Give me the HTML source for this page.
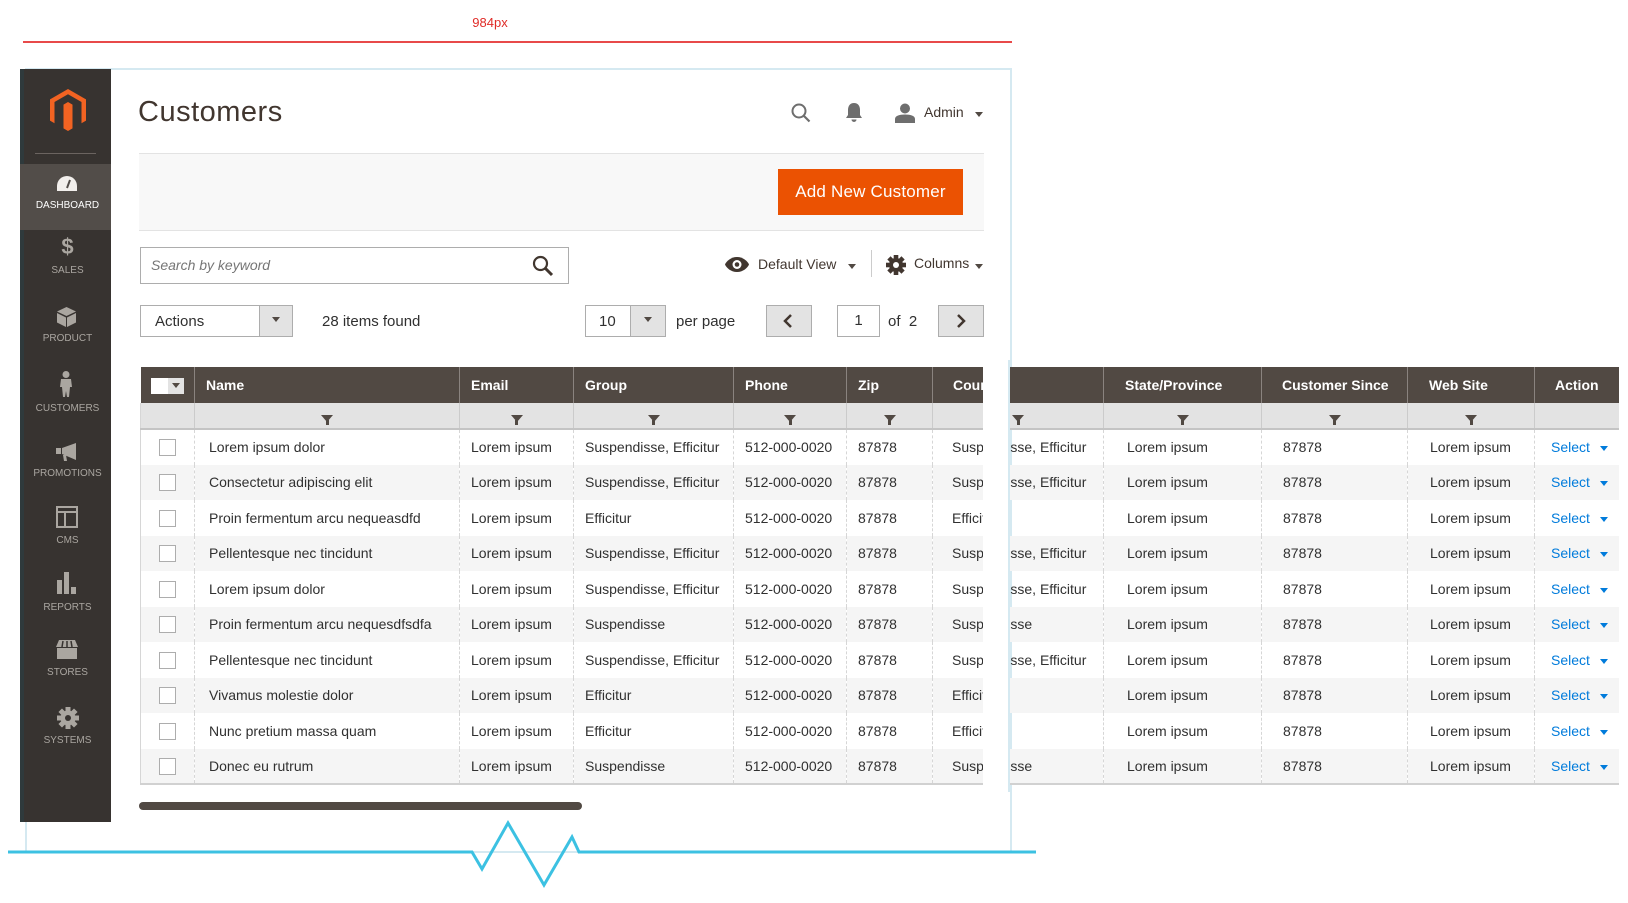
<!DOCTYPE html>
<html><head><meta charset="utf-8">
<style>
*{box-sizing:border-box;margin:0;padding:0}
body{width:1628px;height:903px;background:#fff;position:relative;overflow:hidden;font-family:"Liberation Sans",sans-serif;color:#303030}
.a{position:absolute}
.frame{left:25px;top:68px;width:987px;height:785px;border:2px solid #d5e9f1;background:#fff}
.side{left:20px;top:69px;width:91px;height:753px;background:#373330;border-left:4px solid #2f3a3c}
.mi{position:absolute;left:0;width:87px;text-align:center;font-size:10px;color:#aaa6a0;text-transform:uppercase}
.tbl{left:140px;top:367px;border-collapse:collapse;table-layout:fixed;width:1478px;font-size:14px;z-index:2}
.tbl th{background:#514943;color:#fff;font-weight:bold;text-align:left;height:36px;border-left:1px solid #8a837f;padding-left:11px;white-space:nowrap;overflow:hidden}
.tbl tr.f td{background:#e3e3e3;height:26px;border-left:1px solid #cbcbcb;border-bottom:2px solid #c4c4c4;text-align:center;padding:0}
.tbl td{height:35.5px;white-space:nowrap;overflow:hidden;border-left:1px dashed #d6d6d6;padding-left:11px}
.tbl tr.d:nth-child(even) td{background:#f5f5f5}
.tbl tr.d td:first-child{border-left:1px solid #d6d6d6}
.tbl tr.d:last-child td{border-bottom:2px solid #d1d1d1}
.cb{display:inline-block;width:17px;height:17px;border:1px solid #adadad;background:#fff;vertical-align:middle}
.sel{color:#007bdb}
.fn{display:inline-block;width:0;height:0;border-left:6px solid transparent;border-right:6px solid transparent;border-top:7px solid #514943;position:relative;top:1px}
.fn::after{content:"";position:absolute;left:-1.5px;top:-2px;width:3px;height:5px;background:#514943}
.car{display:inline-block;width:0;height:0;border-left:4px solid transparent;border-right:4px solid transparent;border-top:5px solid #514943;vertical-align:middle}
.btnb{border:1px solid #adadad;background:#fff}
</style></head><body>
<div class="a" style="left:470px;top:15px;width:40px;text-align:center;color:#e02b27;font-size:13px">984px</div>
<div class="a" style="left:23px;top:41px;width:989px;height:2px;background:#e84a4a"></div>

<div class="a frame"></div>

<div class="a side">
  <svg class="a" style="left:26px;top:20px" width="36" height="42" viewBox="0 0 36 42"><path fill="#f26322" d="M18 0 L36 10.4 V31.6 L31.5 34.2 V13 L18 5.2 L4.5 13 V34.2 L0 31.6 V10.4 Z M13.5 15.6 L18 13 L22.5 15.6 V39.4 L18 42 L13.5 39.4 Z"/></svg>
  <div class="a" style="left:11px;top:84px;width:61px;height:1px;background:#6b6460"></div>
  <div class="a" style="left:-4px;top:95px;width:91px;height:66px;background:#524d49"></div>
  <svg class="a" style="left:33px;top:107px" width="20" height="15" viewBox="0 0 20 15"><path fill="#f2efec" d="M10 0A10 10 0 0 0 0 10V15H20V10A10 10 0 0 0 10 0Z"/><path stroke="#524d49" stroke-width="2" d="M10 12L13 4"/></svg>
  <div class="mi" style="top:131px;color:#fff">Dashboard</div>
  <div class="mi" style="top:165px;font-size:22px;font-weight:bold">$</div>
  <div class="mi" style="top:196px">Sales</div>
  <svg class="a" style="left:33px;top:238px" width="19" height="20" viewBox="0 0 19 20"><path fill="#aaa6a0" d="M9.5 0L19 4.5 9.5 9 0 4.5ZM0 6L9 10.5V20L0 15.5ZM10 10.5L19 6V15.5L10 20Z"/></svg>
  <div class="mi" style="top:264px">Product</div>
  <svg class="a" style="left:35px;top:302px" width="14" height="26" viewBox="0 0 14 26"><circle cx="7" cy="3.5" r="3.5" fill="#aaa6a0"/><path fill="#aaa6a0" d="M2 8H12L13 16H11L10 26H8L7 20 6 26H4L3 16H1Z"/></svg>
  <div class="mi" style="top:334px">Customers</div>
  <svg class="a" style="left:32px;top:374px" width="22" height="18" viewBox="0 0 22 18"><path fill="#aaa6a0" d="M0 5H5V11H0ZM6 5L20 0V17L6 11ZM7 12H10L11 18H8Z"/></svg>
  <div class="mi" style="top:399px">Promotions</div>
  <svg class="a" style="left:32px;top:437px" width="22" height="22" viewBox="0 0 22 22"><path fill="#aaa6a0" d="M0 0H22V22H0ZM2 2V5H20V2ZM2 7V20H8V7ZM10 7V20H20V7Z"/></svg>
  <div class="mi" style="top:466px">CMS</div>
  <svg class="a" style="left:33px;top:503px" width="20" height="22" viewBox="0 0 20 22"><path fill="#aaa6a0" d="M0 8H5V22H0ZM7 0H12V22H7ZM14 15H19V22H14Z"/></svg>
  <div class="mi" style="top:533px">Reports</div>
  <svg class="a" style="left:32px;top:571px" width="22" height="19" viewBox="0 0 22 19"><path fill="#aaa6a0" d="M3 0H19L22 7H0ZM1 8H21V19H1Z"/><path stroke="#373330" stroke-width="1.5" d="M7 1L6 7M11 1V7M15 1L16 7"/></svg>
  <div class="mi" style="top:598px">Stores</div>
  <svg class="a" style="left:33px;top:638px" width="22" height="22" viewBox="-11 -11 22 22"><g fill="#aaa6a0"><circle r="7.5"/><rect x="-2.5" y="-11" width="5" height="22"/><rect x="-2.5" y="-11" width="5" height="22" transform="rotate(45)"/><rect x="-2.5" y="-11" width="5" height="22" transform="rotate(90)"/><rect x="-2.5" y="-11" width="5" height="22" transform="rotate(135)"/></g><circle r="3" fill="#373330"/></svg>
  <div class="mi" style="top:666px">Systems</div>
</div>

<div class="a" style="left:138px;top:96px;font-size:29px;color:#41362f;letter-spacing:0.5px">Customers</div>
<svg class="a" style="left:791px;top:103px" width="20" height="20" viewBox="0 0 20 20"><circle cx="8" cy="8" r="6.5" fill="none" stroke="#6e6e6e" stroke-width="2"/><path d="M13 13L18.5 18.5" stroke="#6e6e6e" stroke-width="2.2"/></svg>
<svg class="a" style="left:845px;top:103px" width="18" height="20" viewBox="0 0 18 20"><path fill="#6e6e6e" d="M9 0C5 0 3 3 3 7V12L1 15H17L15 12V7C15 3 13 0 9 0ZM6.5 16.5A2.5 2.5 0 0 0 11.5 16.5Z"/></svg>
<svg class="a" style="left:895px;top:103px" width="20" height="20" viewBox="0 0 20 20"><circle cx="10" cy="5.5" r="5" fill="#6e6e6e"/><path fill="#6e6e6e" d="M0 20V16C0 13 4 11.5 10 11.5S20 13 20 16V20Z"/></svg>
<div class="a" style="left:924px;top:104px;font-size:14px;color:#41362f">Admin</div>
<div class="a" style="left:975px;top:106px"><span class="car"></span></div>

<div class="a" style="left:139px;top:153px;width:845px;height:78px;background:#f8f8f8;border-top:1px solid #e3e3e3;border-bottom:1px solid #e3e3e3"></div>
<div class="a" style="left:778px;top:169px;width:185px;height:46px;background:#eb5202;color:#fff;font-size:17px;line-height:46px;text-align:center;letter-spacing:0.2px">Add New Customer</div>

<div class="a btnb" style="left:140px;top:247px;width:429px;height:37px"></div>
<div class="a" style="left:151px;top:257px;font-size:14px;font-style:italic;color:#757575">Search by keyword</div>
<svg class="a" style="left:532px;top:255px" width="22" height="22" viewBox="0 0 22 22"><circle cx="8.5" cy="8.5" r="6.5" fill="none" stroke="#41362f" stroke-width="2.2"/><path d="M13.5 13.5L20 20" stroke="#41362f" stroke-width="3"/></svg>

<svg class="a" style="left:725px;top:257px" width="24" height="15" viewBox="0 0 24 15"><path fill="#41362f" d="M12 0C6 0 1.5 4 0 7.5 1.5 11 6 15 12 15S22.5 11 24 7.5C22.5 4 18 0 12 0Z"/><circle cx="12" cy="7.5" r="4.5" fill="#fff"/><circle cx="12" cy="7.5" r="2.3" fill="#41362f"/></svg>
<div class="a" style="left:758px;top:256px;font-size:14px;color:#41362f">Default View</div>
<div class="a" style="left:848px;top:258px"><span class="car"></span></div>
<div class="a" style="left:871px;top:250px;width:1px;height:27px;background:#ccc"></div>
<svg class="a" style="left:886px;top:255px" width="20" height="20" viewBox="-10 -10 20 20"><g fill="#41362f"><circle r="7"/><rect x="-2.3" y="-10" width="4.6" height="20"/><rect x="-2.3" y="-10" width="4.6" height="20" transform="rotate(45)"/><rect x="-2.3" y="-10" width="4.6" height="20" transform="rotate(90)"/><rect x="-2.3" y="-10" width="4.6" height="20" transform="rotate(135)"/></g><circle r="3" fill="#fff"/></svg>
<div class="a" style="left:914px;top:255px;font-size:14px;color:#41362f">Columns</div>
<div class="a" style="left:975px;top:258px"><span class="car"></span></div>

<div class="a btnb" style="left:140px;top:305px;width:153px;height:32px"></div>
<div class="a" style="left:259px;top:306px;width:33px;height:30px;background:#e3e3e3;border-left:1px solid #adadad;text-align:center;line-height:28px"><span class="car"></span></div>
<div class="a" style="left:155px;top:313px;font-size:15px;color:#303030">Actions</div>
<div class="a" style="left:322px;top:313px;font-size:15px;color:#303030">28 items found</div>
<div class="a btnb" style="left:585px;top:305px;width:81px;height:32px"></div>
<div class="a" style="left:630px;top:306px;width:35px;height:30px;background:#e3e3e3;border-left:1px solid #adadad;text-align:center;line-height:28px"><span class="car"></span></div>
<div class="a" style="left:599px;top:313px;font-size:15px">10</div>
<div class="a" style="left:676px;top:313px;font-size:15px">per page</div>
<div class="a" style="left:766px;top:305px;width:46px;height:32px;background:#e3e3e3;border:1px solid #adadad"></div>
<svg class="a" style="left:783px;top:314px" width="10" height="14" viewBox="0 0 10 14"><path d="M8 1L2 7 8 13" fill="none" stroke="#41362f" stroke-width="2.5"/></svg>
<div class="a btnb" style="left:837px;top:305px;width:43px;height:32px;text-align:center;line-height:30px;font-size:15px">1</div>
<div class="a" style="left:888px;top:313px;font-size:15px">of&nbsp; 2</div>
<div class="a" style="left:938px;top:305px;width:46px;height:32px;background:#e3e3e3;border:1px solid #adadad"></div>
<svg class="a" style="left:956px;top:314px" width="10" height="14" viewBox="0 0 10 14"><path d="M2 1L8 7 2 13" fill="none" stroke="#41362f" stroke-width="2.5"/></svg>

<table class="a tbl">
<colgroup><col style="width:54px"><col style="width:265px"><col style="width:114px"><col style="width:160px"><col style="width:113px"><col style="width:86px"><col style="width:171px"><col style="width:158px"><col style="width:146px"><col style="width:127px"><col style="width:84px"></colgroup>
<tr><th style="border-left:none;padding-left:10px"><span style="display:inline-block;width:17px;height:16px;background:#fff;vertical-align:middle"></span><span style="display:inline-block;width:16px;height:16px;background:#e3e3e3;vertical-align:middle;text-align:center;line-height:14px"><span class="car"></span></span></th><th>Name</th><th>Email</th><th>Group</th><th>Phone</th><th>Zip</th><th style="padding-left:20px">Country</th><th style="padding-left:21px">State/Province</th><th style="padding-left:20px">Customer Since</th><th style="padding-left:21px">Web Site</th><th style="padding-left:20px">Action</th></tr>
<tr class="f"><td style="border-left:1px solid #d6d6d6"></td><td><span class="fn"></span></td><td><span class="fn"></span></td><td><span class="fn"></span></td><td><span class="fn"></span></td><td><span class="fn"></span></td><td><span class="fn"></span></td><td><span class="fn"></span></td><td><span class="fn"></span></td><td><span class="fn"></span></td><td></td></tr>
<tr class="d"><td style="padding-left:18px"><span class="cb"></span></td><td style="padding-left:14px">Lorem ipsum dolor</td><td>Lorem ipsum</td><td>Suspendisse, Efficitur</td><td>512-000-0020</td><td>87878</td><td style="padding-left:19px">Suspendisse, Efficitur</td><td style="padding-left:23px">Lorem ipsum</td><td style="padding-left:21px">87878</td><td style="padding-left:22px">Lorem ipsum</td><td style="padding-left:16px"><span class="sel">Select</span> <span class="car" style="border-top-color:#007bdb;margin-left:6px"></span></td></tr>
<tr class="d"><td style="padding-left:18px"><span class="cb"></span></td><td style="padding-left:14px">Consectetur adipiscing elit</td><td>Lorem ipsum</td><td>Suspendisse, Efficitur</td><td>512-000-0020</td><td>87878</td><td style="padding-left:19px">Suspendisse, Efficitur</td><td style="padding-left:23px">Lorem ipsum</td><td style="padding-left:21px">87878</td><td style="padding-left:22px">Lorem ipsum</td><td style="padding-left:16px"><span class="sel">Select</span> <span class="car" style="border-top-color:#007bdb;margin-left:6px"></span></td></tr>
<tr class="d"><td style="padding-left:18px"><span class="cb"></span></td><td style="padding-left:14px">Proin fermentum arcu nequeasdfd</td><td>Lorem ipsum</td><td>Efficitur</td><td>512-000-0020</td><td>87878</td><td style="padding-left:19px">Efficitur</td><td style="padding-left:23px">Lorem ipsum</td><td style="padding-left:21px">87878</td><td style="padding-left:22px">Lorem ipsum</td><td style="padding-left:16px"><span class="sel">Select</span> <span class="car" style="border-top-color:#007bdb;margin-left:6px"></span></td></tr>
<tr class="d"><td style="padding-left:18px"><span class="cb"></span></td><td style="padding-left:14px">Pellentesque nec tincidunt</td><td>Lorem ipsum</td><td>Suspendisse, Efficitur</td><td>512-000-0020</td><td>87878</td><td style="padding-left:19px">Suspendisse, Efficitur</td><td style="padding-left:23px">Lorem ipsum</td><td style="padding-left:21px">87878</td><td style="padding-left:22px">Lorem ipsum</td><td style="padding-left:16px"><span class="sel">Select</span> <span class="car" style="border-top-color:#007bdb;margin-left:6px"></span></td></tr>
<tr class="d"><td style="padding-left:18px"><span class="cb"></span></td><td style="padding-left:14px">Lorem ipsum dolor</td><td>Lorem ipsum</td><td>Suspendisse, Efficitur</td><td>512-000-0020</td><td>87878</td><td style="padding-left:19px">Suspendisse, Efficitur</td><td style="padding-left:23px">Lorem ipsum</td><td style="padding-left:21px">87878</td><td style="padding-left:22px">Lorem ipsum</td><td style="padding-left:16px"><span class="sel">Select</span> <span class="car" style="border-top-color:#007bdb;margin-left:6px"></span></td></tr>
<tr class="d"><td style="padding-left:18px"><span class="cb"></span></td><td style="padding-left:14px">Proin fermentum arcu nequesdfsdfa</td><td>Lorem ipsum</td><td>Suspendisse</td><td>512-000-0020</td><td>87878</td><td style="padding-left:19px">Suspendisse</td><td style="padding-left:23px">Lorem ipsum</td><td style="padding-left:21px">87878</td><td style="padding-left:22px">Lorem ipsum</td><td style="padding-left:16px"><span class="sel">Select</span> <span class="car" style="border-top-color:#007bdb;margin-left:6px"></span></td></tr>
<tr class="d"><td style="padding-left:18px"><span class="cb"></span></td><td style="padding-left:14px">Pellentesque nec tincidunt</td><td>Lorem ipsum</td><td>Suspendisse, Efficitur</td><td>512-000-0020</td><td>87878</td><td style="padding-left:19px">Suspendisse, Efficitur</td><td style="padding-left:23px">Lorem ipsum</td><td style="padding-left:21px">87878</td><td style="padding-left:22px">Lorem ipsum</td><td style="padding-left:16px"><span class="sel">Select</span> <span class="car" style="border-top-color:#007bdb;margin-left:6px"></span></td></tr>
<tr class="d"><td style="padding-left:18px"><span class="cb"></span></td><td style="padding-left:14px">Vivamus molestie dolor</td><td>Lorem ipsum</td><td>Efficitur</td><td>512-000-0020</td><td>87878</td><td style="padding-left:19px">Efficitur</td><td style="padding-left:23px">Lorem ipsum</td><td style="padding-left:21px">87878</td><td style="padding-left:22px">Lorem ipsum</td><td style="padding-left:16px"><span class="sel">Select</span> <span class="car" style="border-top-color:#007bdb;margin-left:6px"></span></td></tr>
<tr class="d"><td style="padding-left:18px"><span class="cb"></span></td><td style="padding-left:14px">Nunc pretium massa quam</td><td>Lorem ipsum</td><td>Efficitur</td><td>512-000-0020</td><td>87878</td><td style="padding-left:19px">Efficitur</td><td style="padding-left:23px">Lorem ipsum</td><td style="padding-left:21px">87878</td><td style="padding-left:22px">Lorem ipsum</td><td style="padding-left:16px"><span class="sel">Select</span> <span class="car" style="border-top-color:#007bdb;margin-left:6px"></span></td></tr>
<tr class="d"><td style="padding-left:18px"><span class="cb"></span></td><td style="padding-left:14px">Donec eu rutrum</td><td>Lorem ipsum</td><td>Suspendisse</td><td>512-000-0020</td><td>87878</td><td style="padding-left:19px">Suspendisse</td><td style="padding-left:23px">Lorem ipsum</td><td style="padding-left:21px">87878</td><td style="padding-left:22px">Lorem ipsum</td><td style="padding-left:16px"><span class="sel">Select</span> <span class="car" style="border-top-color:#007bdb;margin-left:6px"></span></td></tr>
</table>

<div class="a" style="left:983px;top:360px;width:27px;height:432px;background:#fff;border-right:2px solid #d5e9f1;z-index:3"></div>

<div class="a" style="left:139px;top:802px;width:443px;height:8px;border-radius:4px;background:#514943"></div>

<svg class="a" style="left:0;top:810px;z-index:4" width="1040" height="80" viewBox="0 810 1040 80"><path d="M8 852H472L482 869 508 823 544 885 572 837 579 852H1036" fill="none" stroke="#3cc1e2" stroke-width="3"/></svg>
</body></html>
